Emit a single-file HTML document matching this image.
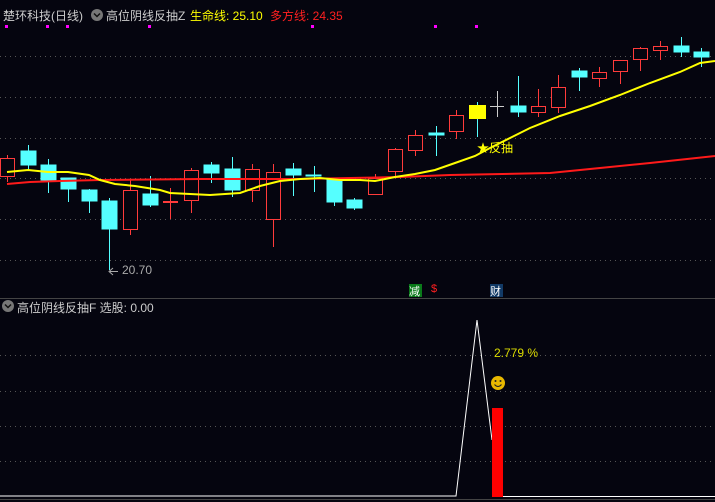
<!DOCTYPE html>
<html><head><meta charset="utf-8"><style>
body{margin:0;background:#05050f;width:715px;height:502px;overflow:hidden;position:relative;font-family:"Liberation Sans","Noto Sans CJK SC",sans-serif}
.t{position:absolute;font-size:12px;white-space:nowrap}
</style></head><body>
<svg width="715" height="502" style="position:absolute;left:0;top:0">
<g stroke="#555" stroke-dasharray="1,4" stroke-width="1">
<line x1="0" y1="56.5" x2="715" y2="56.5"/><line x1="0" y1="97.5" x2="715" y2="97.5"/><line x1="0" y1="138.5" x2="715" y2="138.5"/><line x1="0" y1="178.5" x2="715" y2="178.5"/><line x1="0" y1="219.5" x2="715" y2="219.5"/><line x1="0" y1="260.5" x2="715" y2="260.5"/>
<line x1="0" y1="355.5" x2="715" y2="355.5"/><line x1="0" y1="391.5" x2="715" y2="391.5"/><line x1="0" y1="426.5" x2="715" y2="426.5"/><line x1="0" y1="461.5" x2="715" y2="461.5"/>
</g>
<line x1="0" y1="298.5" x2="715" y2="298.5" stroke="#444"/>
<line x1="0" y1="499.5" x2="715" y2="499.5" stroke="#444"/>
<g fill="#f0f">
<rect x="5" y="25" width="3" height="3"/><rect x="46" y="25" width="3" height="3"/><rect x="66" y="25" width="3" height="3"/><rect x="148" y="25" width="3" height="3"/><rect x="311" y="25" width="3" height="3"/><rect x="434" y="25" width="3" height="3"/><rect x="475" y="25" width="3" height="3"/>
</g>
<!-- candles -->
<g stroke-width="1">
<!-- red hollow: wick line then rect -->
<g stroke="#ff3b3b" fill="none">
<line x1="7.5" y1="155" x2="7.5" y2="182"/><rect x="0.5" y="158.5" width="14" height="18" fill="#05050f"/>
<line x1="130.5" y1="180" x2="130.5" y2="235"/><rect x="123.5" y="190.5" width="14" height="39" fill="#05050f"/>
<line x1="170.5" y1="188" x2="170.5" y2="219"/><line x1="163" y1="202" x2="178" y2="202" stroke-width="2"/>
<line x1="191.5" y1="168" x2="191.5" y2="213"/><rect x="184.5" y="170.5" width="14" height="30" fill="#05050f"/>
<line x1="252.5" y1="164" x2="252.5" y2="202"/><rect x="245.5" y="169.5" width="14" height="21" fill="#05050f"/>
<line x1="273.5" y1="164" x2="273.5" y2="247"/><rect x="266.5" y="172.5" width="14" height="47" fill="#05050f"/>
<line x1="375.5" y1="174" x2="375.5" y2="194"/><rect x="368.5" y="178.5" width="14" height="16" fill="#05050f"/>
<line x1="395.5" y1="148" x2="395.5" y2="178"/><rect x="388.5" y="149.5" width="14" height="22" fill="#05050f"/>
<line x1="415.5" y1="130" x2="415.5" y2="156"/><rect x="408.5" y="135.5" width="14" height="15" fill="#05050f"/>
<line x1="456.5" y1="110" x2="456.5" y2="139"/><rect x="449.5" y="115.5" width="14" height="16" fill="#05050f"/>
<line x1="538.5" y1="89" x2="538.5" y2="117"/><rect x="531.5" y="106.5" width="14" height="6" fill="#05050f"/>
<line x1="558.5" y1="75" x2="558.5" y2="113"/><rect x="551.5" y="87.5" width="14" height="20" fill="#05050f"/>
<line x1="599.5" y1="67" x2="599.5" y2="87"/><rect x="592.5" y="72.5" width="14" height="6" fill="#05050f"/>
<line x1="620.5" y1="60" x2="620.5" y2="84"/><rect x="613.5" y="60.5" width="14" height="11" fill="#05050f"/>
<line x1="640.5" y1="47" x2="640.5" y2="71"/><rect x="633.5" y="48.5" width="14" height="11" fill="#05050f"/>
<line x1="660.5" y1="41" x2="660.5" y2="60"/><rect x="653.5" y="46.5" width="14" height="4" fill="#05050f"/>
</g>
<g stroke="#55ffff" fill="#55ffff">
<line x1="28.5" y1="145" x2="28.5" y2="170"/><rect x="21" y="151" width="15" height="14"/>
<line x1="48.5" y1="159" x2="48.5" y2="193"/><rect x="41" y="165" width="15" height="15"/>
<line x1="68.5" y1="178" x2="68.5" y2="202"/><rect x="61" y="178" width="15" height="11"/>
<line x1="89.5" y1="189" x2="89.5" y2="213"/><rect x="82" y="190" width="15" height="11"/>
<line x1="109.5" y1="198" x2="109.5" y2="270"/><rect x="102" y="201" width="15" height="28"/>
<line x1="150.5" y1="176" x2="150.5" y2="207"/><rect x="143" y="194" width="15" height="11"/>
<line x1="211.5" y1="162" x2="211.5" y2="183"/><rect x="204" y="165" width="15" height="8"/>
<line x1="232.5" y1="157" x2="232.5" y2="197"/><rect x="225" y="169" width="15" height="21"/>
<line x1="293.5" y1="163" x2="293.5" y2="196"/><rect x="286" y="169" width="15" height="6"/>
<line x1="314.5" y1="166" x2="314.5" y2="192"/><rect x="306" y="175" width="15" height="1"/>
<line x1="334.5" y1="178" x2="334.5" y2="206"/><rect x="327" y="180" width="15" height="22"/>
<line x1="354.5" y1="198" x2="354.5" y2="210"/><rect x="347" y="200" width="15" height="8"/>
<line x1="436.5" y1="126" x2="436.5" y2="156"/><rect x="429" y="133" width="15" height="2"/>
<line x1="518.5" y1="76" x2="518.5" y2="117"/><rect x="511" y="106" width="15" height="6"/>
<line x1="579.5" y1="68" x2="579.5" y2="91"/><rect x="572" y="71" width="15" height="6"/>
<line x1="681.5" y1="37" x2="681.5" y2="57"/><rect x="674" y="46" width="15" height="6"/>
<line x1="701.5" y1="48" x2="701.5" y2="67"/><rect x="694" y="52" width="15" height="5"/>
</g>
<line x1="477.5" y1="102" x2="477.5" y2="137" stroke="#55ffff"/><rect x="469" y="105" width="17" height="14" fill="#ffff00"/>
<line x1="497.5" y1="91" x2="497.5" y2="117" stroke="#ccc"/><line x1="490" y1="106.5" x2="504" y2="106.5" stroke="#ccc"/>
</g>
<polyline fill="none" stroke="#ff1a1a" stroke-width="2" points="7,184 30,182 60,181 100,180 200,179 300,179 400,177 450,175 550,173 600,168 650,163 715,156"/>
<polyline fill="none" stroke="#ffff00" stroke-width="2" points="7,172 28,170 48,172 68,172 89,175 100,180 115,184 135,186 160,190 170,193 210,195 240,193 260,186 280,181 300,179 320,178 340,180 360,180 375,181 395,177 415,174 435,170 455,163 475,156 490,148 510,138 530,128 560,116 590,106 620,95 650,83 680,72 700,63 715,61"/>
<line x1="110" y1="271.5" x2="118" y2="271.5" stroke="#aaa"/><path d="M113,268 L109,271.5 L113,275" stroke="#aaa" fill="none"/>
<!-- lower -->
<polyline fill="none" stroke="#fff" stroke-width="1" points="0,496 456,496 477,320 492,440"/>
<line x1="503" y1="496.5" x2="715" y2="496.5" stroke="#fff"/>
<rect x="492" y="408" width="11" height="89" fill="#ff0000"/>
<circle cx="498" cy="383" r="7" fill="#e8b800"/><circle cx="495.5" cy="381" r="1" fill="#222"/><circle cx="500.5" cy="381" r="1" fill="#222"/><path d="M494.5,384.5 Q498,388.5 501.5,384.5" stroke="#222" fill="none"/>
<circle cx="97" cy="15" r="6" fill="#777"/><path d="M94,13.5 L97,16.5 L100,13.5" stroke="#111" stroke-width="1.5" fill="none"/>
<circle cx="8" cy="306" r="6" fill="#777"/><path d="M5,304.5 L8,307.5 L11,304.5" stroke="#111" stroke-width="1.5" fill="none"/>
<rect x="409" y="284" width="13" height="13" fill="#0a7a1a"/>
<rect x="490" y="284" width="13" height="13" fill="#123a66"/>
</svg>
<div class="t" style="left:3px;top:7px;color:#ccc">楚环科技(日线)</div>
<div class="t" style="left:106px;top:7px;color:#ccc">高位阴线反抽Z</div>
<div class="t" style="left:190px;top:7px;color:#ffff00">生命线: 25.10</div>
<div class="t" style="left:270px;top:7px;color:#ff2020">多方线: 24.35</div>
<div class="t" style="left:122px;top:263px;color:#aaa">20.70</div>
<div class="t" style="left:477px;top:139px;color:#ffff00">★反抽</div>
<div class="t" style="left:17px;top:299px;color:#ccc">高位阴线反抽F&nbsp;选股: 0.00</div>
<div class="t" style="left:494px;top:346px;color:#dddd00">2.779 %</div>
<div class="t" style="left:409px;top:283px;color:#fff;font-size:11px">减</div>
<div class="t" style="left:431px;top:283px;color:#ff2020;font-size:11px">$</div>
<div class="t" style="left:490px;top:283px;color:#fff;font-size:11px">财</div>
</body></html>
